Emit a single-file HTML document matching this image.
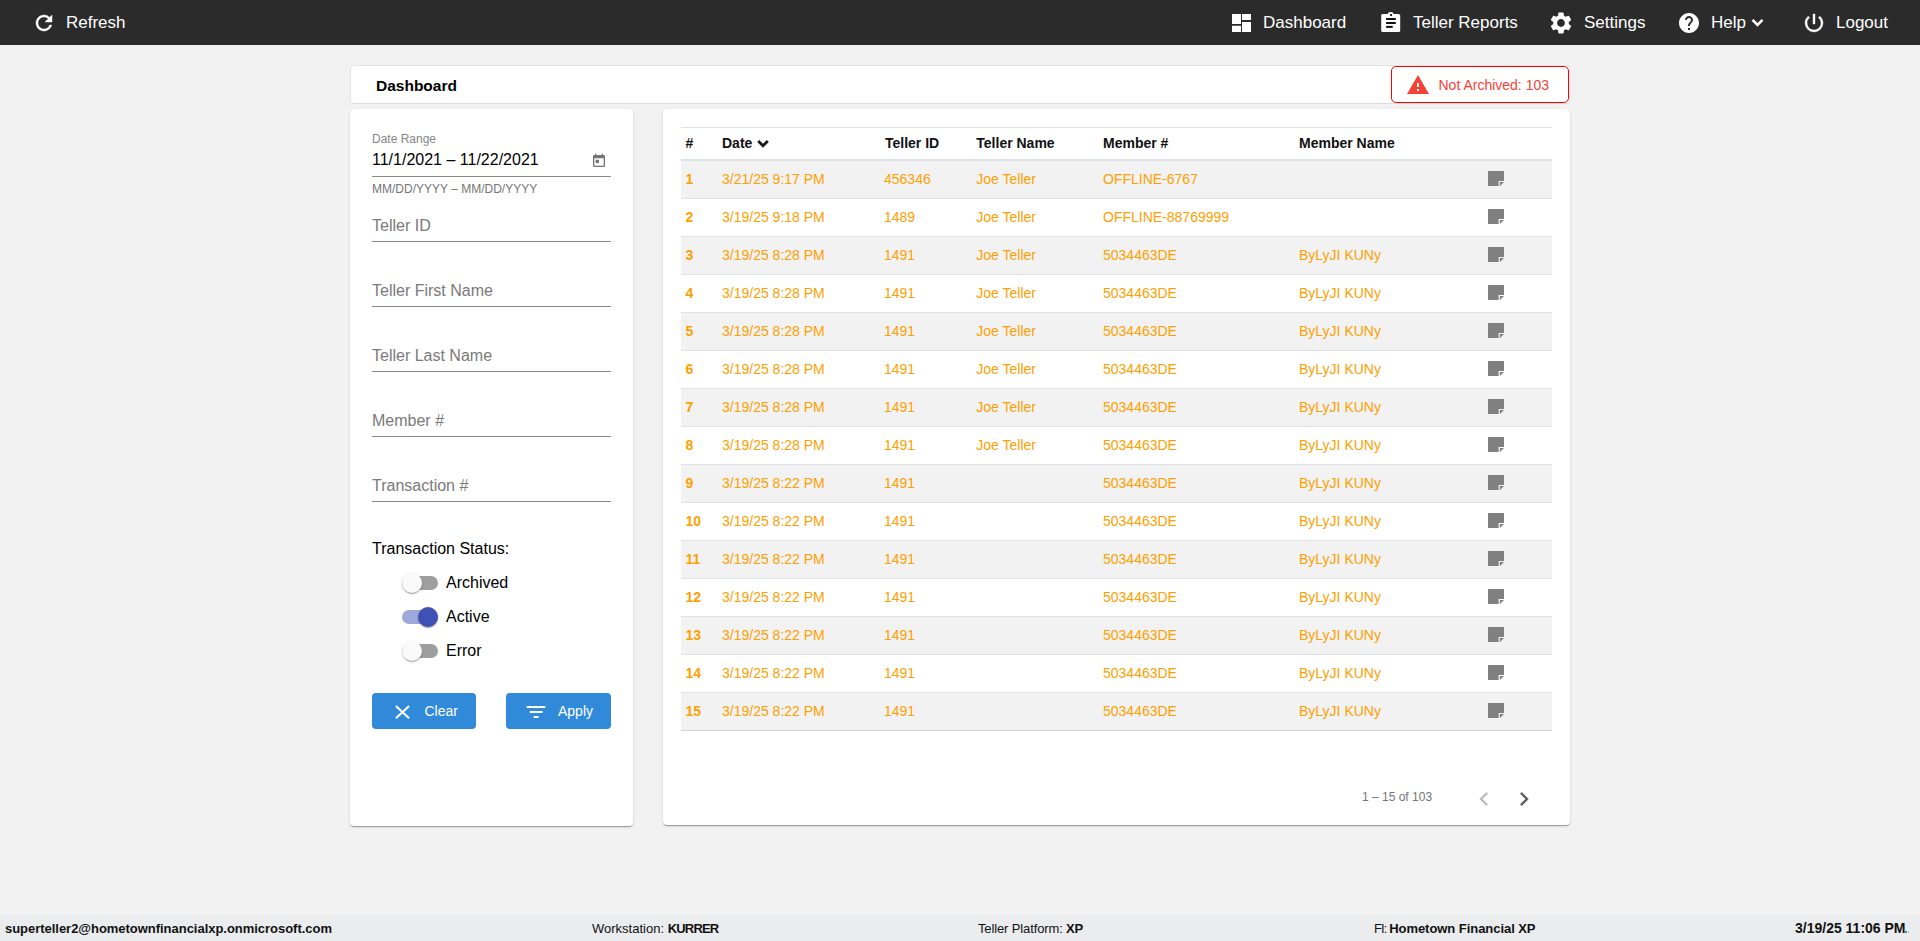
<!DOCTYPE html><html><head><meta charset="utf-8"><style>
*{margin:0;padding:0;box-sizing:border-box}
html,body{width:1920px;height:941px;overflow:hidden}
body{background:#f2f2f2;font-family:"Liberation Sans",sans-serif;position:relative;color:#000}
.a{position:absolute;white-space:nowrap;line-height:1}
#hdr{position:absolute;left:0;top:0;width:1920px;height:45px;background:#2b2b2b}
.nav{color:#fff;font-size:17px}
svg{position:absolute;display:block}
.card{position:absolute;background:#fff;border-radius:4px}
.lbl{color:#757575}
.ul{position:absolute;left:372px;width:239px;height:1px;background:#8a8a8a}
.ph{color:#7a7a7a;font-size:16px}
.trk{position:absolute;width:36px;height:14px;border-radius:7px;background:#9e9e9e}
.thm{position:absolute;width:20px;height:20px;border-radius:50%;background:#fafafa;box-shadow:0 2px 1px -1px rgba(0,0,0,.2),0 1px 1px 0 rgba(0,0,0,.14),0 1px 3px 0 rgba(0,0,0,.12)}
.btn{position:absolute;height:36px;top:693px;background:#318ad9;border-radius:4px}
.th{font-weight:bold;font-size:14px;color:#111}
.td{font-size:14px;color:#ffa000}
.ft{font-size:13px;color:#111}
</style></head><body>
<div id="hdr">
<svg style="left:32px;top:11px" width="24" height="24" viewBox="0 0 24 24"><path fill="#fff" stroke="#fff" stroke-width="0.45" d="M17.65 6.35A7.958 7.958 0 0 0 12 4c-4.42 0-7.99 3.58-7.99 8s3.57 8 7.99 8c3.73 0 6.84-2.55 7.73-6h-2.08A5.99 5.99 0 0 1 12 18c-3.31 0-6-2.69-6-6s2.69-6 6-6c1.66 0 3.14.69 4.22 1.78L13 11h7V4l-2.35 2.35z"/></svg>
<div class="a nav" style="left:66px;top:13.61px">Refresh</div>
<svg style="left:1226px;top:8px" width="30" height="28" viewBox="0 0 30 28"><path fill="#fff" d="M6 6h9v10H6zM6 17.8h9V24H6zM16 6h9v6H16zM16 13.9h9V24H16z"/></svg>
<div class="a nav" style="left:1263px;top:14.11px">Dashboard</div>
<svg style="left:1376px;top:8px" width="30" height="28" viewBox="0 0 30 28"><rect x="5.2" y="6" width="19" height="18" rx="1.6" fill="#fff"/><path fill="#fff" d="M11.4 6.5L12.6 4.6Q13.2 3.9 14.7 3.9Q16.2 3.9 16.8 4.6L18 6.5Z"/><rect x="14" y="6" width="2" height="2" fill="#2b2b2b"/><rect x="10.1" y="10" width="9.7" height="2" fill="#111"/><rect x="10.1" y="14" width="9.7" height="2" fill="#111"/><rect x="10.1" y="17.9" width="6.6" height="2" fill="#111"/></svg>
<div class="a nav" style="left:1413px;top:14.11px">Teller Reports</div>
<svg style="left:1548.4px;top:9.9px" width="26" height="26" viewBox="0 0 24 24"><path fill="#fff" d="M19.14 12.94c.04-.3.06-.61.06-.94 0-.32-.02-.64-.07-.94l2.03-1.58a.49.49 0 0 0 .12-.61l-1.92-3.32a.488.488 0 0 0-.59-.22l-2.39.96c-.5-.38-1.03-.7-1.62-.94l-.36-2.54a.484.484 0 0 0-.48-.41h-3.84c-.24 0-.43.17-.47.41l-.36 2.54c-.59.24-1.13.57-1.62.94l-2.39-.96c-.22-.08-.47 0-.59.22L2.74 8.87c-.12.21-.08.47.12.61l2.03 1.58c-.05.3-.09.63-.09.94s.02.64.07.94l-2.03 1.58a.49.49 0 0 0-.12.61l1.92 3.32c.12.22.37.29.59.22l2.39-.96c.5.38 1.03.7 1.62.94l.36 2.54c.05.24.24.41.48.41h3.84c.24 0 .44-.17.47-.41l.36-2.54c.59-.24 1.13-.56 1.62-.94l2.39.96c.22.08.47 0 .59-.22l1.92-3.32c.12-.22.07-.47-.12-.61l-2.01-1.58zM12 15.6c-1.98 0-3.6-1.62-3.6-3.6s1.62-3.6 3.6-3.6 3.6 1.62 3.6 3.6-1.62 3.6-3.6 3.6z"/></svg>
<div class="a nav" style="left:1584px;top:14.11px">Settings</div>
<svg style="left:1677px;top:11px" width="24" height="24" viewBox="0 0 24 24"><path fill="#fff" d="M12 2C6.48 2 2 6.48 2 12s4.48 10 10 10 10-4.48 10-10S17.52 2 12 2zm1 17h-2v-2h2v2zm2.07-7.75l-.9.92C13.45 12.9 13 13.5 13 15h-2v-.5c0-1.1.45-2.1 1.17-2.83l1.24-1.26c.37-.36.59-.86.59-1.41 0-1.1-.9-2-2-2s-2 .9-2 2H8c0-2.21 1.79-4 4-4s4 1.79 4 4c0 .88-.36 1.68-.93 2.25z"/></svg>
<div class="a nav" style="left:1711px;top:14.11px">Help</div>
<svg style="left:1749px;top:14px" width="18" height="16" viewBox="0 0 18 16"><path fill="none" stroke="#fff" stroke-width="2.6" d="M3.5 5.8l5 5 5-5"/></svg>
<svg style="left:1802px;top:11px" width="24" height="24" viewBox="0 0 24 24"><path fill="#fff" stroke="#fff" stroke-width="0.4" d="M13 3h-2v10h2V3zm4.83 2.17l-1.42 1.42A6.92 6.92 0 0 1 19 12c0 3.87-3.13 7-7 7A6.995 6.995 0 0 1 7.58 6.58L6.17 5.17A8.932 8.932 0 0 0 3 12a9 9 0 0 0 18 0c0-2.74-1.23-5.18-3.17-6.83z"/></svg>
<div class="a nav" style="left:1836px;top:14.11px">Logout</div>
</div>
<div class="card" style="left:350px;top:65px;width:1220px;height:39px;border:1px solid #e3e3e3;border-bottom-color:#dcdcdc"></div>
<div class="a" style="left:376px;top:77.88px;font-size:15.5px;font-weight:bold">Dashboard</div>
<div style="position:absolute;left:1391px;top:66px;width:178px;height:37px;border:1.5px solid #f00;border-radius:5px;background:#fff"></div>
<svg style="left:1406px;top:73px" width="24" height="24" viewBox="0 0 24 24"><path fill="#f44336" d="M1 21h22L12 2 1 21zm12-3h-2v-2h2v2zm0-4h-2v-4h2v4z"/></svg>
<div class="a" style="left:1438.5px;top:78.35px;font-size:14px;color:#f44336">Not Archived: 103</div>
<div class="card" style="left:350px;top:109px;width:283px;height:717px;box-shadow:0 2px 1px -1px rgba(0,0,0,.2),0 1px 1px 0 rgba(0,0,0,.14),0 1px 3px 0 rgba(0,0,0,.12)"></div>
<div class="a lbl" style="left:372px;top:133.34px;font-size:12px;color:#858585">Date Range</div>
<div class="a" style="left:372px;top:152.06px;font-size:16px">11/1/2021 – 11/22/2021</div>
<svg style="left:591px;top:153px" width="16" height="16" viewBox="0 0 24 24"><path fill="#757575" d="M19 3h-1V1h-2v2H8V1H6v2H5c-1.11 0-1.99.9-1.99 2L3 19a2 2 0 0 0 2 2h14c1.1 0 2-.9 2-2V5c0-1.1-.9-2-2-2zm0 16H5V8h14v11zM7 10h5v5H7z"/></svg>
<div class="ul" style="top:176px"></div>
<div class="a lbl" style="left:372px;top:183.34px;font-size:12px">MM/DD/YYYY – MM/DD/YYYY</div>
<div class="a ph" style="left:372px;top:218.46px">Teller ID</div>
<div class="ul" style="top:241px"></div>
<div class="a ph" style="left:372px;top:283.46px">Teller First Name</div>
<div class="ul" style="top:306px"></div>
<div class="a ph" style="left:372px;top:348.46px">Teller Last Name</div>
<div class="ul" style="top:371px"></div>
<div class="a ph" style="left:372px;top:413.46px">Member #</div>
<div class="ul" style="top:436px"></div>
<div class="a ph" style="left:372px;top:478.46px">Transaction #</div>
<div class="ul" style="top:501px"></div>
<div class="a" style="left:372px;top:541.46px;font-size:16px">Transaction Status:</div>
<div class="trk" style="left:402px;top:576px"></div>
<div class="thm" style="left:402px;top:573px"></div>
<div class="a" style="left:446px;top:575.46px;font-size:16px">Archived</div>
<div class="trk" style="left:402px;top:610px;background:#9fa8da"></div>
<div class="thm" style="left:418px;top:607px;background:#3f51b5"></div>
<div class="a" style="left:446px;top:609.46px;font-size:16px">Active</div>
<div class="trk" style="left:402px;top:644px"></div>
<div class="thm" style="left:402px;top:641px"></div>
<div class="a" style="left:446px;top:643.46px;font-size:16px">Error</div>
<div class="btn" style="left:372px;width:104px"></div>
<svg style="left:388px;top:698px" width="30" height="28" viewBox="0 0 30 28"><path fill="none" stroke="#fff" stroke-width="2.1" d="M7.9 8L21.1 20.2M21.1 8L7.9 20.2"/></svg>
<div class="a" style="left:424.5px;top:704.35px;font-size:14px;color:#fff">Clear</div>
<div class="btn" style="left:506px;width:105px"></div>
<svg style="left:520px;top:698px" width="32" height="28" viewBox="0 0 32 28"><path fill="#fff" d="M6.7 7.95h18.6v2H6.7zM9.8 13h12.8v2H9.8zM13.7 18h4.8v2h-4.8z"/></svg>
<div class="a" style="left:558px;top:704.35px;font-size:14px;color:#fff">Apply</div>
<div class="card" style="left:663px;top:109px;width:907px;height:716px;box-shadow:0 2px 1px -1px rgba(0,0,0,.2),0 1px 1px 0 rgba(0,0,0,.14),0 1px 3px 0 rgba(0,0,0,.12)"></div>
<div style="position:absolute;left:681px;top:127px;width:871px;height:1px;background:#dee2e6"></div>
<div class="a th" style="left:685.5px;top:136.15px">#</div>
<div class="a th" style="left:722px;top:136.15px">Date</div>
<div class="a th" style="left:885px;top:136.15px">Teller ID</div>
<div class="a th" style="left:976.3px;top:136.15px">Teller Name</div>
<div class="a th" style="left:1103px;top:136.15px">Member #</div>
<div class="a th" style="left:1299px;top:136.15px">Member Name</div>
<svg style="left:756px;top:136px" width="14" height="14" viewBox="0 0 14 14"><path fill="none" stroke="#1a1a1a" stroke-width="2.8" d="M2.2 5l4.8 4.8 4.8-4.8"/></svg>
<div style="position:absolute;left:681px;top:159px;width:871px;height:2px;background:#dee2e6"></div>
<div style="position:absolute;left:681px;top:161px;width:871px;height:37px;background:#f2f2f2"></div>
<div style="position:absolute;left:681px;top:198px;width:871px;height:1px;background:#dee2e6"></div>
<div class="a td" style="left:685.5px;top:172.15px;font-weight:bold;">1</div>
<div class="a td" style="left:722px;top:172.15px;">3/21/25 9:17 PM</div>
<div class="a td" style="left:884px;top:172.15px;">456346</div>
<div class="a td" style="left:976.3px;top:172.15px;">Joe Teller</div>
<div class="a td" style="left:1103px;top:172.15px;">OFFLINE-6767</div>
<svg style="left:1488px;top:171px" width="16" height="15" viewBox="0 0 16 15"><path fill="#808080" d="M0 0H16V10H10.6V15H0Z"/><path fill="#808080" d="M11.8 11H16L11.8 15.2Z"/></svg>
<div style="position:absolute;left:681px;top:199px;width:871px;height:37px;background:#fff"></div>
<div style="position:absolute;left:681px;top:236px;width:871px;height:1px;background:#dee2e6"></div>
<div class="a td" style="left:685.5px;top:210.15px;font-weight:bold;">2</div>
<div class="a td" style="left:722px;top:210.15px;">3/19/25 9:18 PM</div>
<div class="a td" style="left:884px;top:210.15px;">1489</div>
<div class="a td" style="left:976.3px;top:210.15px;">Joe Teller</div>
<div class="a td" style="left:1103px;top:210.15px;">OFFLINE-88769999</div>
<svg style="left:1488px;top:209px" width="16" height="15" viewBox="0 0 16 15"><path fill="#808080" d="M0 0H16V10H10.6V15H0Z"/><path fill="#808080" d="M11.8 11H16L11.8 15.2Z"/></svg>
<div style="position:absolute;left:681px;top:237px;width:871px;height:37px;background:#f2f2f2"></div>
<div style="position:absolute;left:681px;top:274px;width:871px;height:1px;background:#dee2e6"></div>
<div class="a td" style="left:685.5px;top:248.15px;font-weight:bold;">3</div>
<div class="a td" style="left:722px;top:248.15px;">3/19/25 8:28 PM</div>
<div class="a td" style="left:884px;top:248.15px;">1491</div>
<div class="a td" style="left:976.3px;top:248.15px;">Joe Teller</div>
<div class="a td" style="left:1103px;top:248.15px;">5034463DE</div>
<div class="a td" style="left:1299px;top:248.15px;">ByLyJI KUNy</div>
<svg style="left:1488px;top:247px" width="16" height="15" viewBox="0 0 16 15"><path fill="#808080" d="M0 0H16V10H10.6V15H0Z"/><path fill="#808080" d="M11.8 11H16L11.8 15.2Z"/></svg>
<div style="position:absolute;left:681px;top:275px;width:871px;height:37px;background:#fff"></div>
<div style="position:absolute;left:681px;top:312px;width:871px;height:1px;background:#dee2e6"></div>
<div class="a td" style="left:685.5px;top:286.15px;font-weight:bold;">4</div>
<div class="a td" style="left:722px;top:286.15px;">3/19/25 8:28 PM</div>
<div class="a td" style="left:884px;top:286.15px;">1491</div>
<div class="a td" style="left:976.3px;top:286.15px;">Joe Teller</div>
<div class="a td" style="left:1103px;top:286.15px;">5034463DE</div>
<div class="a td" style="left:1299px;top:286.15px;">ByLyJI KUNy</div>
<svg style="left:1488px;top:285px" width="16" height="15" viewBox="0 0 16 15"><path fill="#808080" d="M0 0H16V10H10.6V15H0Z"/><path fill="#808080" d="M11.8 11H16L11.8 15.2Z"/></svg>
<div style="position:absolute;left:681px;top:313px;width:871px;height:37px;background:#f2f2f2"></div>
<div style="position:absolute;left:681px;top:350px;width:871px;height:1px;background:#dee2e6"></div>
<div class="a td" style="left:685.5px;top:324.15px;font-weight:bold;">5</div>
<div class="a td" style="left:722px;top:324.15px;">3/19/25 8:28 PM</div>
<div class="a td" style="left:884px;top:324.15px;">1491</div>
<div class="a td" style="left:976.3px;top:324.15px;">Joe Teller</div>
<div class="a td" style="left:1103px;top:324.15px;">5034463DE</div>
<div class="a td" style="left:1299px;top:324.15px;">ByLyJI KUNy</div>
<svg style="left:1488px;top:323px" width="16" height="15" viewBox="0 0 16 15"><path fill="#808080" d="M0 0H16V10H10.6V15H0Z"/><path fill="#808080" d="M11.8 11H16L11.8 15.2Z"/></svg>
<div style="position:absolute;left:681px;top:351px;width:871px;height:37px;background:#fff"></div>
<div style="position:absolute;left:681px;top:388px;width:871px;height:1px;background:#dee2e6"></div>
<div class="a td" style="left:685.5px;top:362.15px;font-weight:bold;">6</div>
<div class="a td" style="left:722px;top:362.15px;">3/19/25 8:28 PM</div>
<div class="a td" style="left:884px;top:362.15px;">1491</div>
<div class="a td" style="left:976.3px;top:362.15px;">Joe Teller</div>
<div class="a td" style="left:1103px;top:362.15px;">5034463DE</div>
<div class="a td" style="left:1299px;top:362.15px;">ByLyJI KUNy</div>
<svg style="left:1488px;top:361px" width="16" height="15" viewBox="0 0 16 15"><path fill="#808080" d="M0 0H16V10H10.6V15H0Z"/><path fill="#808080" d="M11.8 11H16L11.8 15.2Z"/></svg>
<div style="position:absolute;left:681px;top:389px;width:871px;height:37px;background:#f2f2f2"></div>
<div style="position:absolute;left:681px;top:426px;width:871px;height:1px;background:#dee2e6"></div>
<div class="a td" style="left:685.5px;top:400.15px;font-weight:bold;">7</div>
<div class="a td" style="left:722px;top:400.15px;">3/19/25 8:28 PM</div>
<div class="a td" style="left:884px;top:400.15px;">1491</div>
<div class="a td" style="left:976.3px;top:400.15px;">Joe Teller</div>
<div class="a td" style="left:1103px;top:400.15px;">5034463DE</div>
<div class="a td" style="left:1299px;top:400.15px;">ByLyJI KUNy</div>
<svg style="left:1488px;top:399px" width="16" height="15" viewBox="0 0 16 15"><path fill="#808080" d="M0 0H16V10H10.6V15H0Z"/><path fill="#808080" d="M11.8 11H16L11.8 15.2Z"/></svg>
<div style="position:absolute;left:681px;top:427px;width:871px;height:37px;background:#fff"></div>
<div style="position:absolute;left:681px;top:464px;width:871px;height:1px;background:#dee2e6"></div>
<div class="a td" style="left:685.5px;top:438.15px;font-weight:bold;">8</div>
<div class="a td" style="left:722px;top:438.15px;">3/19/25 8:28 PM</div>
<div class="a td" style="left:884px;top:438.15px;">1491</div>
<div class="a td" style="left:976.3px;top:438.15px;">Joe Teller</div>
<div class="a td" style="left:1103px;top:438.15px;">5034463DE</div>
<div class="a td" style="left:1299px;top:438.15px;">ByLyJI KUNy</div>
<svg style="left:1488px;top:437px" width="16" height="15" viewBox="0 0 16 15"><path fill="#808080" d="M0 0H16V10H10.6V15H0Z"/><path fill="#808080" d="M11.8 11H16L11.8 15.2Z"/></svg>
<div style="position:absolute;left:681px;top:465px;width:871px;height:37px;background:#f2f2f2"></div>
<div style="position:absolute;left:681px;top:502px;width:871px;height:1px;background:#dee2e6"></div>
<div class="a td" style="left:685.5px;top:476.15px;font-weight:bold;">9</div>
<div class="a td" style="left:722px;top:476.15px;">3/19/25 8:22 PM</div>
<div class="a td" style="left:884px;top:476.15px;">1491</div>
<div class="a td" style="left:1103px;top:476.15px;">5034463DE</div>
<div class="a td" style="left:1299px;top:476.15px;">ByLyJI KUNy</div>
<svg style="left:1488px;top:475px" width="16" height="15" viewBox="0 0 16 15"><path fill="#808080" d="M0 0H16V10H10.6V15H0Z"/><path fill="#808080" d="M11.8 11H16L11.8 15.2Z"/></svg>
<div style="position:absolute;left:681px;top:503px;width:871px;height:37px;background:#fff"></div>
<div style="position:absolute;left:681px;top:540px;width:871px;height:1px;background:#dee2e6"></div>
<div class="a td" style="left:685.5px;top:514.15px;font-weight:bold;">10</div>
<div class="a td" style="left:722px;top:514.15px;">3/19/25 8:22 PM</div>
<div class="a td" style="left:884px;top:514.15px;">1491</div>
<div class="a td" style="left:1103px;top:514.15px;">5034463DE</div>
<div class="a td" style="left:1299px;top:514.15px;">ByLyJI KUNy</div>
<svg style="left:1488px;top:513px" width="16" height="15" viewBox="0 0 16 15"><path fill="#808080" d="M0 0H16V10H10.6V15H0Z"/><path fill="#808080" d="M11.8 11H16L11.8 15.2Z"/></svg>
<div style="position:absolute;left:681px;top:541px;width:871px;height:37px;background:#f2f2f2"></div>
<div style="position:absolute;left:681px;top:578px;width:871px;height:1px;background:#dee2e6"></div>
<div class="a td" style="left:685.5px;top:552.15px;font-weight:bold;">11</div>
<div class="a td" style="left:722px;top:552.15px;">3/19/25 8:22 PM</div>
<div class="a td" style="left:884px;top:552.15px;">1491</div>
<div class="a td" style="left:1103px;top:552.15px;">5034463DE</div>
<div class="a td" style="left:1299px;top:552.15px;">ByLyJI KUNy</div>
<svg style="left:1488px;top:551px" width="16" height="15" viewBox="0 0 16 15"><path fill="#808080" d="M0 0H16V10H10.6V15H0Z"/><path fill="#808080" d="M11.8 11H16L11.8 15.2Z"/></svg>
<div style="position:absolute;left:681px;top:579px;width:871px;height:37px;background:#fff"></div>
<div style="position:absolute;left:681px;top:616px;width:871px;height:1px;background:#dee2e6"></div>
<div class="a td" style="left:685.5px;top:590.15px;font-weight:bold;">12</div>
<div class="a td" style="left:722px;top:590.15px;">3/19/25 8:22 PM</div>
<div class="a td" style="left:884px;top:590.15px;">1491</div>
<div class="a td" style="left:1103px;top:590.15px;">5034463DE</div>
<div class="a td" style="left:1299px;top:590.15px;">ByLyJI KUNy</div>
<svg style="left:1488px;top:589px" width="16" height="15" viewBox="0 0 16 15"><path fill="#808080" d="M0 0H16V10H10.6V15H0Z"/><path fill="#808080" d="M11.8 11H16L11.8 15.2Z"/></svg>
<div style="position:absolute;left:681px;top:617px;width:871px;height:37px;background:#f2f2f2"></div>
<div style="position:absolute;left:681px;top:654px;width:871px;height:1px;background:#dee2e6"></div>
<div class="a td" style="left:685.5px;top:628.15px;font-weight:bold;">13</div>
<div class="a td" style="left:722px;top:628.15px;">3/19/25 8:22 PM</div>
<div class="a td" style="left:884px;top:628.15px;">1491</div>
<div class="a td" style="left:1103px;top:628.15px;">5034463DE</div>
<div class="a td" style="left:1299px;top:628.15px;">ByLyJI KUNy</div>
<svg style="left:1488px;top:627px" width="16" height="15" viewBox="0 0 16 15"><path fill="#808080" d="M0 0H16V10H10.6V15H0Z"/><path fill="#808080" d="M11.8 11H16L11.8 15.2Z"/></svg>
<div style="position:absolute;left:681px;top:655px;width:871px;height:37px;background:#fff"></div>
<div style="position:absolute;left:681px;top:692px;width:871px;height:1px;background:#dee2e6"></div>
<div class="a td" style="left:685.5px;top:666.15px;font-weight:bold;">14</div>
<div class="a td" style="left:722px;top:666.15px;">3/19/25 8:22 PM</div>
<div class="a td" style="left:884px;top:666.15px;">1491</div>
<div class="a td" style="left:1103px;top:666.15px;">5034463DE</div>
<div class="a td" style="left:1299px;top:666.15px;">ByLyJI KUNy</div>
<svg style="left:1488px;top:665px" width="16" height="15" viewBox="0 0 16 15"><path fill="#808080" d="M0 0H16V10H10.6V15H0Z"/><path fill="#808080" d="M11.8 11H16L11.8 15.2Z"/></svg>
<div style="position:absolute;left:681px;top:693px;width:871px;height:37px;background:#f2f2f2"></div>
<div style="position:absolute;left:681px;top:730px;width:871px;height:1px;background:#d4d4d4"></div>
<div class="a td" style="left:685.5px;top:704.15px;font-weight:bold;">15</div>
<div class="a td" style="left:722px;top:704.15px;">3/19/25 8:22 PM</div>
<div class="a td" style="left:884px;top:704.15px;">1491</div>
<div class="a td" style="left:1103px;top:704.15px;">5034463DE</div>
<div class="a td" style="left:1299px;top:704.15px;">ByLyJI KUNy</div>
<svg style="left:1488px;top:703px" width="16" height="15" viewBox="0 0 16 15"><path fill="#808080" d="M0 0H16V10H10.6V15H0Z"/><path fill="#808080" d="M11.8 11H16L11.8 15.2Z"/></svg>
<div class="a" style="left:1362px;top:791.09px;font-size:12px;color:#757575">1 – 15 of 103</div>
<svg style="left:1470px;top:785px" width="28" height="28" viewBox="0 0 24 24"><path fill="#bdbdbd" d="M15.41 7.41L14 6l-6 6 6 6 1.41-1.41L10.83 12z"/></svg>
<svg style="left:1510px;top:785px" width="28" height="28" viewBox="0 0 24 24"><path fill="#616161" d="M10 6L8.59 7.41 13.17 12l-4.58 4.59L10 18l6-6z"/></svg>
<div style="position:absolute;left:0;top:915px;width:1920px;height:26px;background:#ebecee"></div>
<div class="a ft" style="left:5px;top:921.75px;font-weight:bold;letter-spacing:-0.03px">superteller2@hometownfinancialxp.onmicrosoft.com</div>
<div class="a ft" style="left:592px;top:921.75px">Workstation: <b style="letter-spacing:-0.8px">KURRER</b></div>
<div class="a ft" style="left:978px;top:921.75px"><span style="letter-spacing:-0.13px">Teller Platform: </span><b style="letter-spacing:-0.3px">XP</b></div>
<div class="a ft" style="left:1374px;top:921.75px"><span style="letter-spacing:-0.9px">FI: </span><b style="letter-spacing:-0.05px">Hometown Financial XP</b></div>
<div class="a ft" style="left:1795px;top:921.15px;font-size:14px;font-weight:bold">3/19/25 11:06 PM</div>
<div style="position:absolute;left:1905px;top:931px;width:2px;height:2px;background:#6a7a90"></div>
<div style="position:absolute;left:1908px;top:931px;width:1px;height:2px;background:#c8c4c0"></div>
</body></html>
